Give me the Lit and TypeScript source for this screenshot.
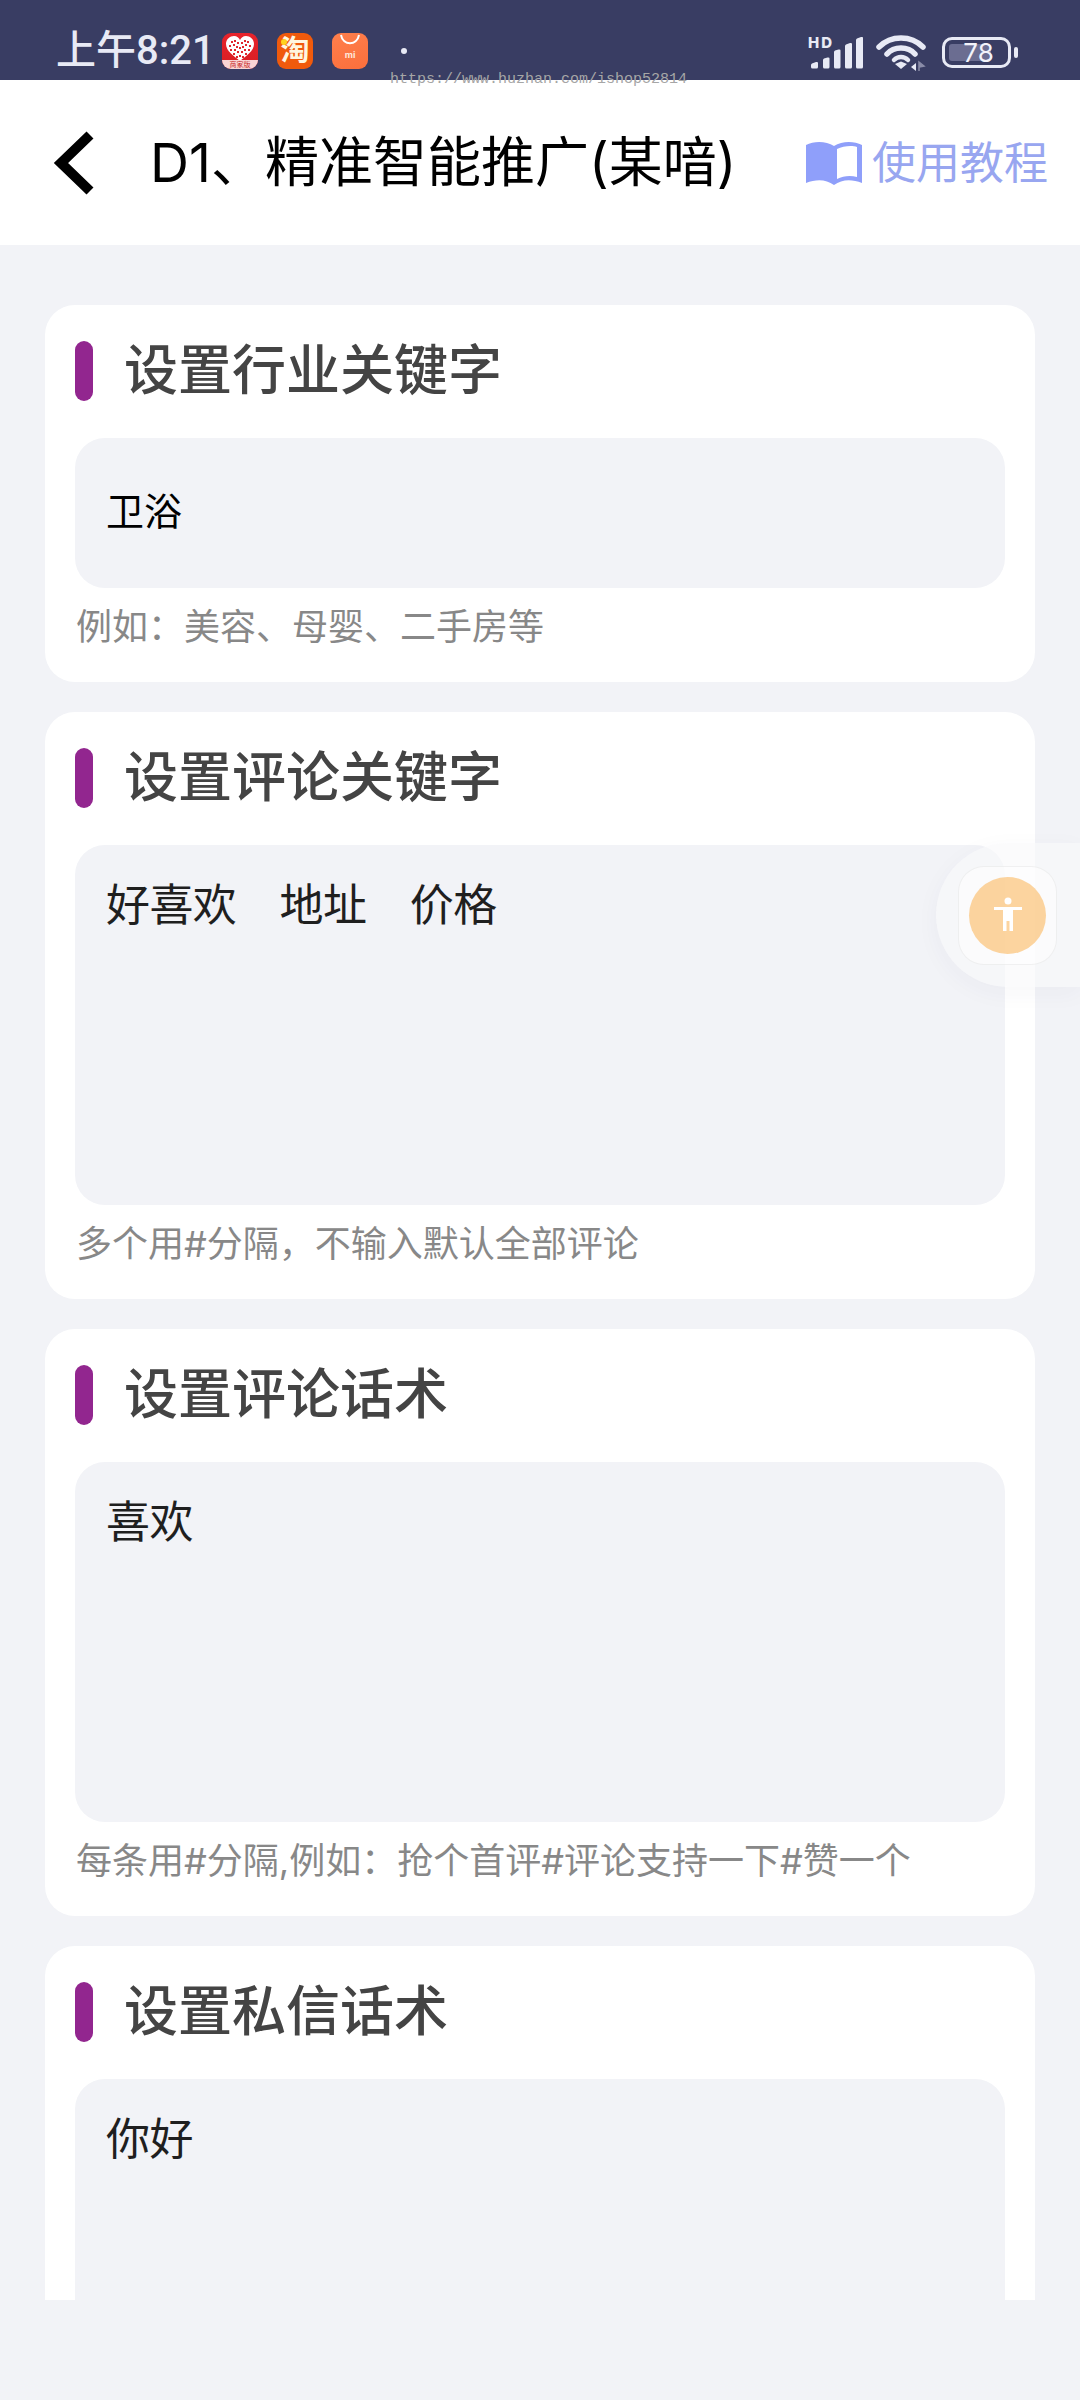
import { LitElement, html, css, svg } from "lit";
import { customElement } from "lit/decorators.js";

interface Section {
  title: string;
  value: string;
  hint?: string;
  size: "small" | "large";
}

const sections: Section[] = [
  { title: "设置行业关键字", value: "卫浴", hint: "例如\uFF1A美容、母婴、二手房等", size: "small" },
  { title: "设置评论关键字", value: "好喜欢\u3000地址\u3000价格", hint: "多个用#分隔\uFF0C不输入默认全部评论", size: "large" },
  { title: "设置评论话术", value: "喜欢", hint: "每条用#分隔,例如\uFF1A抢个首评#评论支持一下#赞一个", size: "large" },
  { title: "设置私信话术", value: "你好", size: "large" },
];

const heartCells = [
  [10, 9], [13, 8], [16, 10], [20, 10], [23, 8], [26, 9],
  [8, 13], [12, 12], [15, 14], [21, 14], [24, 12], [28, 13],
  [9, 17], [13, 17], [18, 15], [23, 17], [27, 17],
  [12, 21], [16, 19], [20, 19], [24, 21], [15, 24], [21, 24], [18, 23],
];

@customElement("app-root")
export class AppRoot extends LitElement {
  static styles = css`
    :host {
      display: flex;
      flex-direction: column;
      position: relative;
      width: 1080px;
      height: 2400px;
      overflow: hidden;
      background: #f2f3f7;
      font-family: "Inter", "Noto Sans CJK SC", sans-serif;
    }
    .status {
      flex: none;
      height: 80px;
      background: #393d63;
      color: #e8eaf5;
      display: flex;
      align-items: flex-start;
      box-sizing: border-box;
      padding: 33px 0 0 56px;
    }
    .time {
      font-family: "Roboto", "Noto Sans CJK SC", sans-serif;
      font-size: 40px;
      line-height: 36px;
      font-weight: 500;
      width: 166px;
      white-space: nowrap;
    }
    .apps {
      display: flex;
      gap: 19px;
    }
    .app {
      width: 36px;
      height: 36px;
      border-radius: 9px;
      position: relative;
      overflow: hidden;
      display: block;
    }
    .pdd {
      background: linear-gradient(#e8242c, #d81e22);
    }
    .pdd svg {
      display: block;
    }
    .pdd-band {
      position: absolute;
      left: 0;
      right: 0;
      bottom: 0;
      height: 9px;
      background: #f9d5d5;
      color: #c92a2a;
      font-size: 7px;
      line-height: 9px;
      text-align: center;
    }
    .tao {
      background: #f05a0c;
      color: #fff6e0;
      font-size: 29px;
      line-height: 36px;
      font-weight: 700;
      text-align: center;
    }
    .tao-dot {
      position: absolute;
      left: 4px;
      top: 6px;
      width: 6px;
      height: 6px;
      border-radius: 50%;
      background: #ffd21f;
    }
    .mi {
      background: linear-gradient(160deg, #ff7f4c, #fb6f3c);
      color: #ffe8dc;
    }
    .mi svg {
      position: absolute;
      left: 7px;
      top: 0;
    }
    .mi-text {
      position: absolute;
      left: 0;
      right: 0;
      top: 17px;
      text-align: center;
      font-size: 9px;
      line-height: 10px;
      font-weight: 700;
    }
    .notif-dot {
      width: 6px;
      height: 6px;
      border-radius: 50%;
      background: #e8eaf5;
      margin: 15px 0 0 33px;
    }
    .sys {
      margin-left: auto;
      margin-top: 4px;
      margin-right: 62px;
      display: flex;
      align-items: flex-start;
    }
    .signal {
      position: relative;
      width: 56px;
      height: 32px;
    }
    .signal svg {
      display: block;
    }
    .hd {
      position: absolute;
      left: 1px;
      top: -2px;
      font-size: 15px;
      line-height: 15px;
      font-weight: 800;
      letter-spacing: 2px;
    }
    .wifi {
      margin-left: 13px;
      margin-top: -3px;
      display: block;
    }
    .battery {
      margin-left: 16px;
      display: flex;
      align-items: center;
      gap: 3px;
    }
    .batt-body {
      position: relative;
      width: 69px;
      height: 31px;
      box-sizing: border-box;
      border: 3px solid #e8eaf5;
      border-radius: 10px;
      display: flex;
      align-items: center;
      justify-content: center;
      padding-left: 4px;
    }
    .batt-fill {
      position: absolute;
      left: 4px;
      top: 4px;
      bottom: 4px;
      width: 42px;
      border-radius: 3px;
      background: #6b6d91;
    }
    .batt-num {
      position: relative;
      font-size: 26px;
      line-height: 26px;
      font-weight: 400;
      color: #f2f3fa;
    }
    .batt-tip {
      width: 4px;
      height: 11px;
      border-radius: 2px;
      background: #e8eaf5;
    }
    .header {
      flex: none;
      height: 165px;
      background: #fff;
      display: flex;
      align-items: center;
      box-sizing: border-box;
      padding: 0 32px 0 51px;
    }
    .back {
      width: 46px;
      height: 66px;
      display: block;
      flex: none;
    }
    .page-title {
      margin-left: 53px;
      font-size: 54px;
      line-height: 60px;
      color: #000;
      white-space: nowrap;
    }
    .guide {
      margin-left: auto;
      display: flex;
      align-items: center;
      gap: 10px;
      color: #98a6f0;
      font-size: 44px;
      line-height: 54px;
    }
    .book {
      display: block;
    }
    .scroll {
      flex: none;
      height: 2055px;
      overflow: hidden;
      box-sizing: border-box;
      padding: 60px 45px 0;
      display: flex;
      flex-direction: column;
      gap: 30px;
    }
    .card {
      flex: none;
      background: #fff;
      border-radius: 30px;
      box-sizing: border-box;
      padding: 36px 30px 16px;
    }
    .card-head {
      display: flex;
      align-items: center;
      height: 60px;
      margin-bottom: 37px;
    }
    .mark {
      width: 18px;
      height: 60px;
      border-radius: 9px;
      background: #92268f;
      flex: none;
    }
    .card-title {
      margin-left: 31px;
      font-size: 54px;
      line-height: 60px;
      font-weight: 500;
      color: #444;
      white-space: nowrap;
    }
    .field {
      background: #f2f3f7;
      border-radius: 30px;
      box-sizing: border-box;
      padding: 0 31px;
      color: #1f1f1f;
    }
    .field.small {
      height: 150px;
      display: flex;
      align-items: center;
      padding-bottom: 10px;
      font-size: 38px;
      color: #000;
    }
    .field.large {
      height: 360px;
      padding-top: 30px;
      font-size: 44px;
      line-height: 60px;
      letter-spacing: -0.6px;
    }
    .hint {
      font-size: 36px;
      line-height: 78px;
      color: #888;
      padding-left: 1px;
      white-space: nowrap;
    }
    .watermark {
      position: absolute;
      left: 390px;
      top: 71px;
      font-family: "Liberation Mono", monospace;
      font-size: 15px;
      line-height: 17px;
      color: #a6a6a6;
      white-space: nowrap;
    }
    .float {
      position: absolute;
      right: 0;
      top: 843px;
      width: 144px;
      height: 144px;
      box-sizing: border-box;
      border-radius: 72px 0 0 72px;
      background: rgba(248, 248, 250, 0.62);
      box-shadow: 0 6px 24px rgba(60, 60, 90, 0.04);
      display: flex;
      align-items: center;
      padding-left: 22px;
    }
    .float-inner {
      width: 99px;
      height: 99px;
      box-sizing: border-box;
      border-radius: 26px;
      border: 1px solid rgba(0, 0, 0, 0.05);
      background: rgba(255, 255, 255, 0.55);
      display: flex;
      align-items: center;
      justify-content: center;
    }
    .float-ball {
      width: 77px;
      height: 77px;
      border-radius: 50%;
      background: rgba(251, 196, 122, 0.72);
      display: flex;
      align-items: center;
      justify-content: center;
    }
    .float-ball svg {
      display: block;
    }
  `;

  private heartIcon() {
    return html`<svg width="36" height="36" viewBox="0 0 36 36">
      <path d="M18 28 C12 23 4 18 4 11 C4 6 8 3 12 3 C15 3 17 5 18 7 C19 5 21 3 24 3 C28 3 32 6 32 11 C32 18 24 23 18 28 Z" fill="#fff"/>
      ${heartCells.map(
        ([x, y]) => svg`<rect x=${x - 1} y=${y - 1} width="2" height="2" fill="#e0272e"/>`
      )}
    </svg>`;
  }

  private section(s: Section) {
    return html`<section class="card">
      <div class="card-head">
        <span class="mark"></span>
        <span class="card-title">${s.title}</span>
      </div>
      <div class="field ${s.size}">${s.value}</div>
      ${s.hint ? html`<div class="hint">${s.hint}</div>` : null}
    </section>`;
  }

  render() {
    return html`
      <div class="status">
        <span class="time">上午8:21</span>
        <div class="apps">
          <span class="app pdd">${this.heartIcon()}<span class="pdd-band">商家版</span></span>
          <span class="app tao">淘<span class="tao-dot"></span></span>
          <span class="app mi">
            <svg width="22" height="14" viewBox="0 0 22 14"><path d="M2 2 C4 13 18 13 20 2" fill="none" stroke="#fff" stroke-width="2"/></svg>
            <span class="mi-text">mi</span>
          </span>
        </div>
        <span class="notif-dot"></span>
        <div class="sys">
          <div class="signal">
            <span class="hd">HD</span>
            <svg width="56" height="32" viewBox="0 0 56 32" fill="#e8eaf5">
              <path d="M4 28 Q4 27 5 26.5 L9 25 Q11 24.5 11 26 V30 Q11 31.5 9.5 31.5 H5.5 Q4 31.5 4 30 Z"/>
              <path d="M16 23 Q16 22 17 21.5 L20.5 20.5 Q22.5 20 22.5 21.5 V30 Q22.5 31.5 21 31.5 H17.5 Q16 31.5 16 30 Z"/>
              <path d="M27 15 Q27 14 28 13.5 L31.5 12.5 Q33.5 12 33.5 13.5 V30 Q33.5 31.5 32 31.5 H28.5 Q27 31.5 27 30 Z"/>
              <path d="M38 9 Q38 8 39 7.5 L43 6 Q45 5.5 45 7 V30 Q45 31.5 43.5 31.5 H39.5 Q38 31.5 38 30 Z"/>
              <path d="M49 3 Q49 2 50 1.5 L54 0 Q56 -0.5 56 1 V30 Q56 31.5 54.5 31.5 H50.5 Q49 31.5 49 30 Z"/>
            </svg>
          </div>
          <svg class="wifi" width="50" height="38" viewBox="0 0 50 38">
            <g fill="none" stroke="#e8eaf5" stroke-width="5.5" stroke-linecap="round">
              <path d="M3 13 C15 1 35 1 47 13"/>
              <path d="M11 20 C18 12 32 12 39 20"/>
            </g>
            <path d="M18 26 C22 22 28 22 32 26" fill="none" stroke="#e8eaf5" stroke-width="4.5" stroke-linecap="round"/>
            <path d="M19 30 L25 27.5 L31 30 L25 35 Z" fill="#e8eaf5"/>
            <path d="M40 29 L40 37 L35 33 Z" fill="#e8eaf5"/>
            <path d="M43 28 L43 37 M43 28 L48 32 L43 33 Z" fill="#8a8ca8" stroke="#8a8ca8" stroke-width="1.5"/>
          </svg>
          <div class="battery">
            <div class="batt-body">
              <span class="batt-fill"></span>
              <span class="batt-num">78</span>
            </div>
            <span class="batt-tip"></span>
          </div>
        </div>
      </div>
      <div class="header">
        <svg class="back" viewBox="0 0 46 66">
          <path d="M39 5 L10 33 L39 61" fill="none" stroke="#000" stroke-width="10"/>
        </svg>
        <span class="page-title">D1、精准智能推广(某喑)</span>
        <div class="guide">
          <svg class="book" width="56" height="44" viewBox="0 0 56 44">
            <path d="M0 4 C8 0 20 0 28 5 C36 0 48 0 56 4 V42 C46 38 36 38 28 44 C20 38 10 38 0 42 Z" fill="#8f9ffa"/>
            <path d="M31 8 C37 5 46 4 51 6 V36 C44 34 37 35 31 38 Z" fill="#fff"/>
          </svg>
          <span>使用教程</span>
        </div>
      </div>
      <div class="scroll">${sections.map((s) => this.section(s))}</div>
      <div class="watermark">https://www.huzhan.com/ishop52814</div>
      <div class="float">
        <div class="float-inner">
          <div class="float-ball">
            <svg width="30" height="36" viewBox="0 0 30 36">
              <circle cx="15" cy="4" r="3.5" fill="#fff"/>
              <path d="M1 10 H29 V13 H20 V34 H16.5 V24 H13.5 V34 H10 V13 H1 Z" fill="#fff"/>
            </svg>
          </div>
        </div>
      </div>
    `;
  }
}
